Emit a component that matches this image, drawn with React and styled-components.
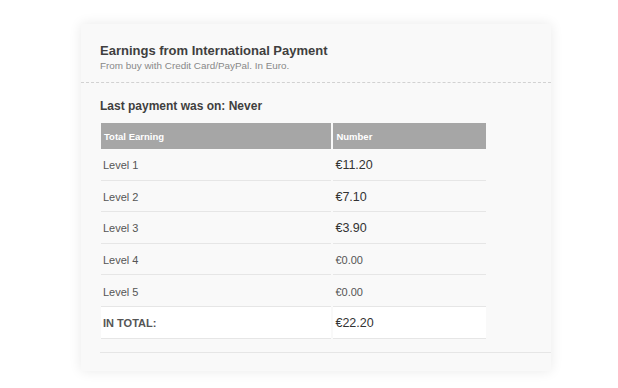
import React from 'react'
import styled, { createGlobalStyle } from 'styled-components'

const GlobalStyle = createGlobalStyle`
body {
  margin: 0;
  background: #ffffff;
  font-family: "Liberation Sans", Arial, sans-serif;
}
`

const Page = styled.div`
width: 618px;
height: 388px;
padding: 24px 0 0 81px;
box-sizing: border-box;
`

const Card = styled.div`
width: 470px;
height: 347px;
background: #f9f9f9;
box-shadow: 0 0 12px rgba(0,0,0,0.09);
display: flex;
flex-direction: column;
`

const Header = styled.div`
padding: 19px 19px 10px;
border-bottom: 1px dashed #d2d2d2;
`

const Title = styled.h3`
margin: 0;
font-size: 13px;
line-height: 16px;
font-weight: bold;
color: #3f3f3f;
`

const Subtitle = styled.div`
font-size: 9.9px;
line-height: 12px;
color: #888;
margin-top: 1px;
`

const Body = styled.div`
padding: 15px 0 0 19px;
`

const LastPayment = styled.h4`
margin: 0 0 9px;
font-size: 12px;
line-height: 16px;
font-weight: bold;
color: #3f3f3f;
`

const Table = styled.table`
border-collapse: separate;
border-spacing: 2px 0;
margin-left: -1px;
width: 389px;
`

const Th = styled.th`
background: #a6a6a6;
color: #fff;
font-size: 9.5px;
font-weight: bold;
text-align: left;
height: 26px;
padding: 0 3px;
width: ${p => p.w}px;
`

const Td = styled.td`
height: 31.6px;
padding: 2px 3px 0 2px;
border-bottom: 1px solid #e6e6e6;
font-size: ${p => p.big ? 12.5 : 11}px;
color: ${p => p.big ? '#333' : '#555'};
font-weight: ${p => p.bold ? 'bold' : 'normal'};
background: ${p => p.total ? '#fff' : 'transparent'};
box-sizing: border-box;
`

const Footer = styled.div`
margin: 13px 0 0 19px;
border-top: 1px solid #e6e6e6;
`

const rows = [
  { level: 'Level 1', value: '€11.20', big: true },
  { level: 'Level 2', value: '€7.10', big: true },
  { level: 'Level 3', value: '€3.90', big: true },
  { level: 'Level 4', value: '€0.00', big: false },
  { level: 'Level 5', value: '€0.00', big: false },
]

function App() {
  return (
    <Page>
      <GlobalStyle />
      <Card>
        <Header>
          <Title>Earnings from International Payment</Title>
          <Subtitle>From buy with Credit Card/PayPal. In Euro.</Subtitle>
        </Header>
        <Body>
          <LastPayment>Last payment was on: Never</LastPayment>
          <Table>
            <thead>
              <tr>
                <Th w={232}>Total Earning</Th>
                <Th w={151}>Number</Th>
              </tr>
            </thead>
            <tbody>
              {rows.map((r, i) => (
                <tr key={i}>
                  <Td>{r.level}</Td>
                  <Td big={r.big}>{r.value}</Td>
                </tr>
              ))}
              <tr>
                <Td total bold>IN TOTAL:</Td>
                <Td total big>€22.20</Td>
              </tr>
            </tbody>
          </Table>
        </Body>
        <Footer />
      </Card>
    </Page>
  )
}

export default App
